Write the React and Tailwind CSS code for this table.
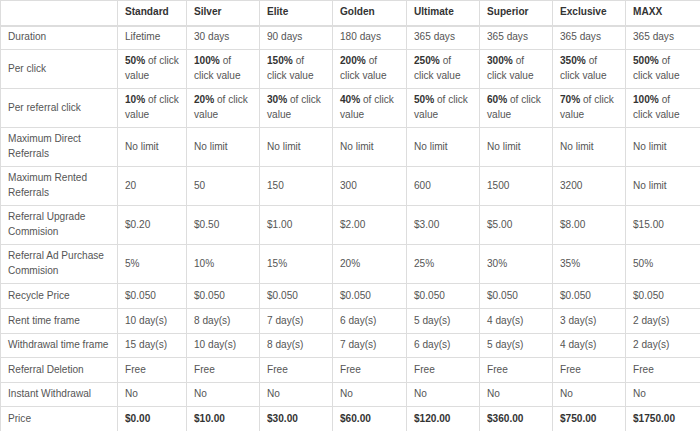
const plans = ["Standard", "Silver", "Elite", "Golden", "Ultimate", "Superior", "Exclusive", "MAXX"];

const widths = ["w-[117px]", "w-[69px]", "w-[73px]", "w-[73px]", "w-[74px]", "w-[73px]", "w-[73px]", "w-[73px]", "w-[75px]"];

// "short" = "X% of / click value", otherwise "X% of click / value"
const pct = (b, short) => ({ bold: b, short });

const rows = [
  { label: "Duration", h: "h-[24px]", cells: ["Lifetime", "30 days", "90 days", "180 days", "365 days", "365 days", "365 days", "365 days"] },
  {
    label: "Per click",
    h: "h-[39px]",
    cells: ["50%", "100%", "150%", "200%", "250%", "300%", "350%", "500%"].map((b, i) => pct(b, i > 0)),
  },
  {
    label: "Per referral click",
    h: "h-[39px]",
    cells: ["10%", "20%", "30%", "40%", "50%", "60%", "70%", "100%"].map((b, i) => pct(b, i === 7)),
  },
  { label: "Maximum Direct", label2: "Referrals", h: "h-[39px]", cells: Array(8).fill("No limit") },
  { label: "Maximum Rented", label2: "Referrals", h: "h-[39px]", cells: ["20", "50", "150", "300", "600", "1500", "3200", "No limit"] },
  { label: "Referral Upgrade", label2: "Commision", h: "h-[39px]", cells: ["$0.20", "$0.50", "$1.00", "$2.00", "$3.00", "$5.00", "$8.00", "$15.00"] },
  { label: "Referral Ad Purchase", label2: "Commision", h: "h-[39px]", cells: ["5%", "10%", "15%", "20%", "25%", "30%", "35%", "50%"] },
  { label: "Recycle Price", h: "h-[25px]", cells: Array(8).fill("$0.050") },
  { label: "Rent time frame", h: "h-[25px]", cells: ["10 day(s)", "8 day(s)", "7 day(s)", "6 day(s)", "5 day(s)", "4 day(s)", "3 day(s)", "2 day(s)"] },
  { label: "Withdrawal time frame", h: "h-[24px]", cells: ["15 day(s)", "10 day(s)", "8 day(s)", "7 day(s)", "6 day(s)", "5 day(s)", "4 day(s)", "2 day(s)"] },
  { label: "Referral Deletion", h: "h-[25px]", cells: Array(8).fill("Free") },
  { label: "Instant Withdrawal", h: "h-[24px]", cells: Array(8).fill("No") },
  { label: "Price", h: "h-[25px]", bold: true, cells: ["$0.00", "$10.00", "$30.00", "$60.00", "$120.00", "$360.00", "$750.00", "$1750.00"] },
];

function Cell({ value, bold }) {
  if (typeof value === "object") {
    return (
      <>
        <b className="font-bold text-[#333]">{value.bold}</b>
        {value.short ? " of" : " of click"}
        <br />
        {value.short ? "click value" : "value"}
      </>
    );
  }
  return bold ? <b className="font-bold text-[#333]">{value}</b> : value;
}

export default function App() {
  return (
    <div className="w-[700px] h-[431px] bg-white overflow-hidden font-['Liberation_Sans',Arial,sans-serif] text-[10.1px] leading-[14.7px] text-[#555]">
      <table className="w-[700px] table-fixed border-collapse">
        <colgroup>
          {widths.map((w, i) => (
            <col key={i} className={w} />
          ))}
        </colgroup>
        <thead>
          <tr className="h-[25px]">
            <th className="border border-[#ddd] border-b-2"></th>
            {plans.map((p) => (
              <th key={p} className="border border-[#ddd] border-b-2 pl-[7px] pr-[4px] text-left align-middle font-bold text-[#333]">
                {p}
              </th>
            ))}
          </tr>
        </thead>
        <tbody>
          {rows.map((r) => (
            <tr key={r.label} className={r.h}>
              <td className="border border-[#ddd] pl-[7px] pr-[4px] align-middle whitespace-nowrap">
                {r.label}
                {r.label2 && (
                  <>
                    <br />
                    {r.label2}
                  </>
                )}
              </td>
              {r.cells.map((c, i) => (
                <td key={i} className="border border-[#ddd] pl-[7px] pr-[4px] align-middle whitespace-nowrap">
                  <Cell value={c} bold={r.bold} />
                </td>
              ))}
            </tr>
          ))}
        </tbody>
      </table>
    </div>
  );
}
